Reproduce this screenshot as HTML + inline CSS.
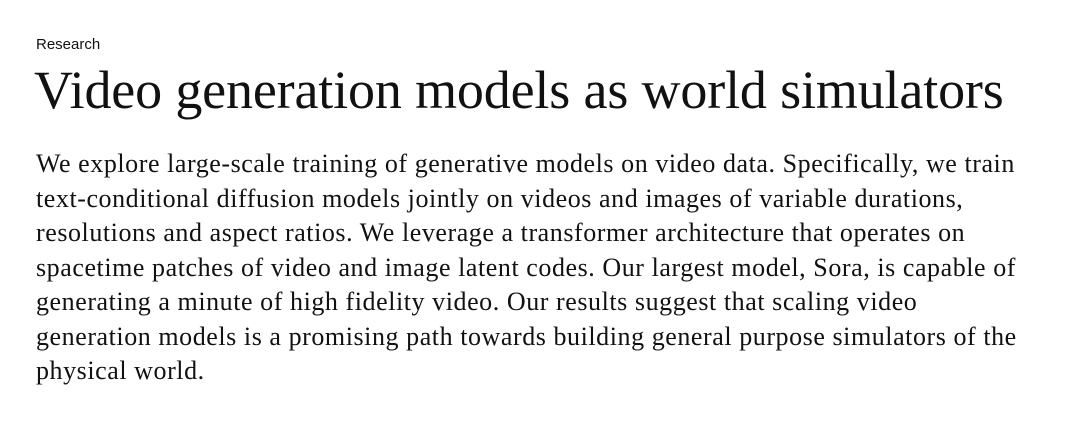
<!DOCTYPE html>
<html><head><style>
html,body{margin:0;padding:0;background:#fff;width:1080px;height:437px;overflow:hidden;color:#111;}
.r{position:absolute;left:36px;top:36px;font:15px "Liberation Sans",sans-serif;}
h1{position:absolute;left:34px;top:60px;margin:0;font:400 54px/60px "Liberation Serif",serif;white-space:nowrap;letter-spacing:-0.15px;}
.b{position:absolute;left:36px;top:147px;font:26px/34.5px "Liberation Serif",serif;white-space:nowrap;letter-spacing:0.56px;}
</style></head><body>
<div class="r">Research</div>
<h1>Video generation models as world simulators</h1>
<div class="b">We explore large-scale training of generative models on video data. Specifically, we train<br>text-conditional diffusion models jointly on videos and images of variable durations,<br>resolutions and aspect ratios. We leverage a transformer architecture that operates on<br>spacetime patches of video and image latent codes. Our largest model, Sora, is capable of<br>generating a minute of high fidelity video. Our results suggest that scaling video<br>generation models is a promising path towards building general purpose simulators of the<br>physical world.</div>
</body></html>
